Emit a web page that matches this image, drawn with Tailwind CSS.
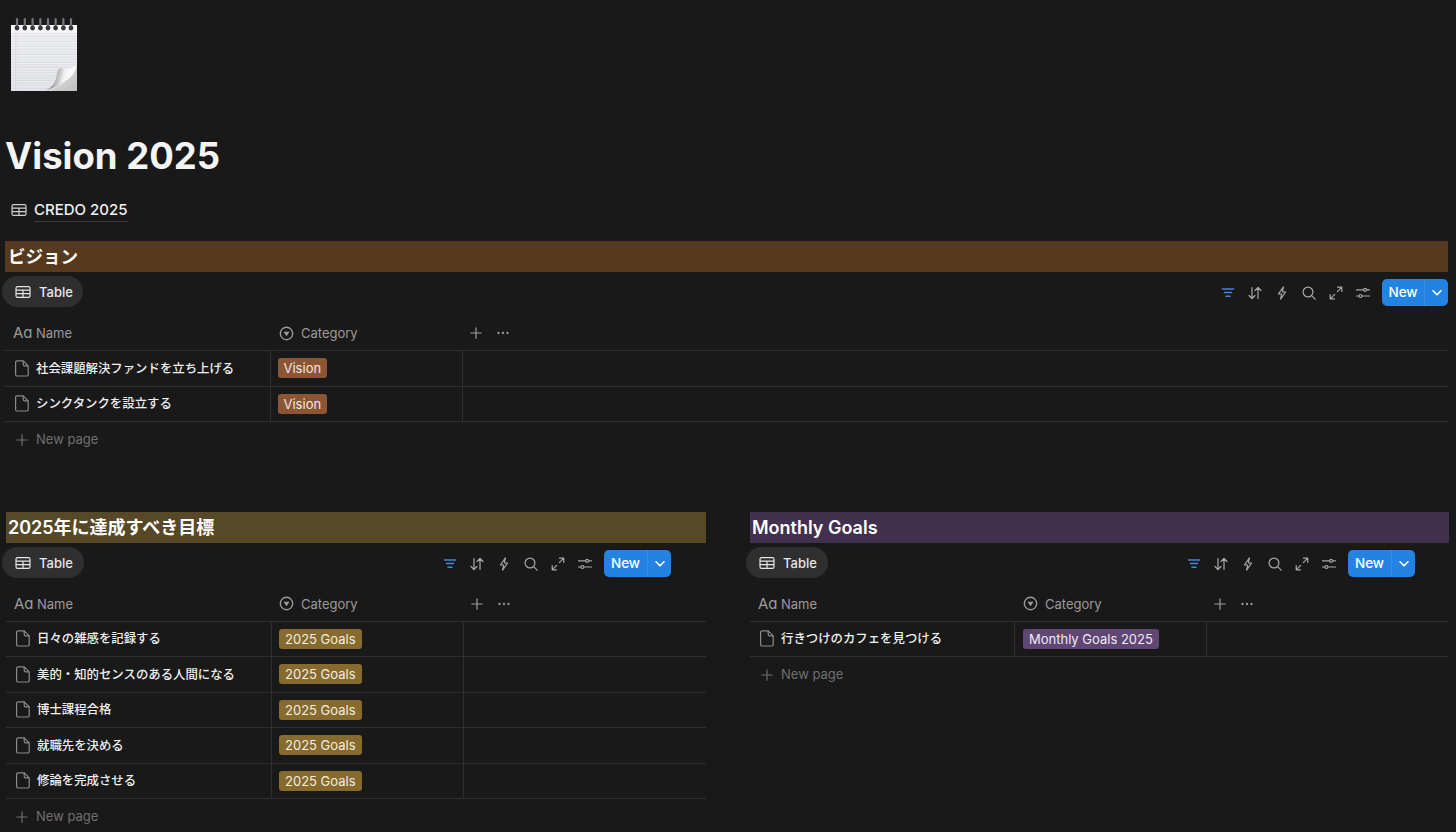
<!DOCTYPE html>
<html lang="ja">
<head>
    <meta charset="UTF-8">
    <meta name="viewport" content="width=device-width, initial-scale=1.0">
    <title>Vision 2025</title>
    <script src="https://cdn.jsdelivr.net/npm/@tailwindcss/browser@4"></script>
</head>
<body class="bg-[#191919] text-white font-[Inter,'Noto_Sans_CJK_JP',sans-serif] h-[832px] overflow-hidden">

    <!-- Shared icons -->
    <svg class="absolute w-0 h-0" aria-hidden="true">
        <symbol id="i-table" viewBox="0 0 16 16" fill="none" stroke="currentColor" stroke-width="1.2">
            <rect x="1" y="2.6" width="14" height="10.8" rx="1.6"/>
            <path d="M1 6.1h14M1 9.7h14M8 6.1v7.3"/>
        </symbol>
        <symbol id="i-filter" viewBox="0 0 16 16" fill="none" stroke="#4a85d6" stroke-width="1.5" stroke-linecap="round">
            <path d="M2.5 4h11M4.5 7.6h7M6 11.2h4"/>
        </symbol>
        <symbol id="i-sort" viewBox="0 0 16 16" fill="none" stroke="currentColor" stroke-width="1.2" stroke-linecap="round" stroke-linejoin="round">
            <path d="M5 2.5v11M2 10.5l3 3 3-3M11 13.5v-11M8 5.5l3-3 3 3"/>
        </symbol>
        <symbol id="i-bolt" viewBox="0 0 16 16" fill="none" stroke="currentColor" stroke-width="1.2" stroke-linejoin="round">
            <path d="M9.4 1.8 4.4 9h3.2l-1 5.2L11.6 7H8.4z"/>
        </symbol>
        <symbol id="i-search" viewBox="0 0 16 16" fill="none" stroke="currentColor" stroke-width="1.2" stroke-linecap="round">
            <circle cx="7" cy="7" r="4.9"/><path d="m10.6 10.6 3.6 3.6"/>
        </symbol>
        <symbol id="i-expand" viewBox="0 0 16 16" fill="none" stroke="currentColor" stroke-width="1.2" stroke-linecap="round" stroke-linejoin="round">
            <path d="M9.5 2.2h4.3v4.3M13.8 2.2 9.3 6.7M6.5 13.8H2.2V9.5M2.2 13.8l4.5-4.5"/>
        </symbol>
        <symbol id="i-sliders" viewBox="0 0 16 16" fill="none" stroke="currentColor" stroke-width="1.2" stroke-linecap="round">
            <path d="M1.5 4.8h7.2M11.6 4.8h2.9M1.5 11h2.4M6.9 11h7.6"/>
            <circle cx="10.1" cy="4.8" r="1.5"/><circle cx="5.4" cy="11" r="1.5"/>
        </symbol>
        <symbol id="i-page" viewBox="0 0 14 17" fill="none" stroke="#8a8a8a" stroke-width="1.2" stroke-linejoin="round">
            <path d="M2.2.8h6l5 5v8.6a1.6 1.6 0 0 1-1.6 1.6H2.2A1.6 1.6 0 0 1 .6 14.4V2.4A1.6 1.6 0 0 1 2.2.8z"/>
            <path d="M8.2.8v3.4c0 .9.7 1.6 1.6 1.6h3.4"/>
        </symbol>
        <symbol id="i-select" viewBox="0 0 16 16">
            <circle cx="8" cy="8" r="6.6" fill="none" stroke="currentColor" stroke-width="1.5"/>
            <path d="M4.8 6.2h6.4L8 10.9z" fill="currentColor"/>
        </symbol>
        <symbol id="i-plus" viewBox="0 0 12 12" fill="none" stroke="currentColor" stroke-width="1.2" stroke-linecap="round">
            <path d="M6 .8v10.4M.8 6h10.4"/>
        </symbol>
        <symbol id="i-dots" viewBox="0 0 12 4" fill="currentColor">
            <circle cx="1.5" cy="2" r="1.15"/><circle cx="6" cy="2" r="1.15"/><circle cx="10.5" cy="2" r="1.15"/>
        </symbol>
        <symbol id="i-chevron" viewBox="0 0 12 8" fill="none" stroke="currentColor" stroke-width="1.6" stroke-linecap="round" stroke-linejoin="round">
            <path d="m2 1.8 4 4 4-4"/>
        </symbol>
    </svg>

    <main class="pl-[5px] pr-[8px] pt-[16px]">
        <!-- Page icon -->
        <svg class="block ml-[6px]" width="66" height="76" viewBox="0 0 66 76" aria-hidden="true">
            <defs>
                <linearGradient id="paper" x1="0" y1="0" x2="0" y2="1">
                    <stop offset="0" stop-color="#f8f8f9"/>
                    <stop offset="1" stop-color="#e9e9eb"/>
                </linearGradient>
                <linearGradient id="curl" x1="0" y1="0.3" x2="1" y2="0.5">
                    <stop offset="0.05" stop-color="#5a5a5a"/>
                    <stop offset="0.32" stop-color="#a0a0a0"/>
                    <stop offset="0.62" stop-color="#f4f4f4"/>
                    <stop offset="1" stop-color="#ffffff"/>
                </linearGradient>
                <linearGradient id="under" x1="0" y1="0" x2="1" y2="1">
                    <stop offset="0" stop-color="#ececec"/>
                    <stop offset="1" stop-color="#bebebe"/>
                </linearGradient>
                <pattern id="lines" width="66" height="2.6" patternUnits="userSpaceOnUse">
                    <rect y="1.5" width="66" height="0.8" fill="#cdd2dc"/>
                </pattern>
            </defs>
            <rect y="9" width="66" height="66" fill="url(#paper)"/>
            <rect y="17" width="66" height="58" fill="url(#lines)"/>
            <rect x="4.5" y="14" width="0.7" height="61" fill="#dcd4d8"/>
            <path d="M66 48.5 V75 H34 C44 73 50 69 55 65 C60 60 64 55 66 48.5z" fill="url(#under)"/>
            <path d="M34 74.5 C41 72 45 66 46 58 C46.5 54 48 52 50 52 C55 54 60 53 65.5 48.5 C65 56 60 62 54 65 C48 70 40 73 34 74.5z" fill="url(#curl)"/>
            <g fill="none" stroke="#74777d" stroke-width="2.2" stroke-linecap="round">
                <path d="M6 10V3M13.8 10V3M21.6 10V3M29.4 10V3M37 10V3M44.6 10V3M52.4 10V3M60 10V3"/>
            </g>
            <g fill="#34363a">
                <circle cx="6" cy="12" r="2.4"/><circle cx="13.8" cy="12" r="2.4"/><circle cx="21.6" cy="12" r="2.4"/><circle cx="29.4" cy="12" r="2.4"/><circle cx="37" cy="12" r="2.4"/><circle cx="44.6" cy="12" r="2.4"/><circle cx="52.4" cy="12" r="2.4"/><circle cx="60" cy="12" r="2.4"/>
            </g>
        </svg>

        <h1 class="mt-[40px] text-[36.5px] leading-[48px] font-bold text-[#f4f4f4]">Vision 2025</h1>

        <a class="mt-[16px] ml-[6px] flex items-center gap-[7px] h-[28px] text-[#d0d0d0]">
            <svg class="w-[16px] h-[16px]"><use href="#i-table"/></svg>
            <span class="text-[15px] leading-[22px] font-medium text-[#f0f0f0] border-b border-[#3a3a3a]">CREDO 2025</span>
        </a>

        <!-- ビジョン -->
        <section class="mt-[17px]">
            <h2 class="h-[31px] pl-[3px] bg-[#563a1f] text-[17.5px] leading-[31px] font-semibold">ビジョン</h2>
            <div class="h-[44px] pt-[4px] flex items-start">
                <div class="-ml-[3px] h-[31px] w-[81px] rounded-full bg-[#2f2f2f] flex items-center gap-[8px] pl-[13px] text-[13px] font-medium text-[#e6e6e6]">
                    <svg class="w-[16px] h-[16px]"><use href="#i-table"/></svg><span class="mt-[2px]">Table</span>
                </div>
                <div class="ml-auto mt-[3px] h-[27px] flex items-center gap-[11px] text-[#a8a8a8]">
                    <svg class="w-[16px] h-[16px]"><use href="#i-filter"/></svg>
                    <svg class="w-[16px] h-[16px]"><use href="#i-sort"/></svg>
                    <svg class="w-[16px] h-[16px]"><use href="#i-bolt"/></svg>
                    <svg class="w-[16px] h-[16px]"><use href="#i-search"/></svg>
                    <svg class="w-[16px] h-[16px]"><use href="#i-expand"/></svg>
                    <svg class="w-[16px] h-[16px]"><use href="#i-sliders"/></svg>
                    <div class="h-[27px] w-[66px] rounded-[5px] bg-[#2383e2] flex text-white">
                        <span class="w-[43px] flex items-center justify-center text-[13.5px] font-medium border-r border-[#4f9be8]/50">New</span>
                        <span class="flex-1 flex items-center justify-center"><svg class="w-[12px] h-[8px]"><use href="#i-chevron"/></svg></span>
                    </div>
                </div>
            </div>
            <div class="h-[35px] flex items-center border-b border-[#2f2f2f] text-[13px] text-[#9b9b9b]">
                <div class="w-[265px] flex items-center pl-[8px] gap-[5px]"><span class="w-[18px] text-[15px] leading-[18px]">Aɑ</span><span class="mt-[2px]">Name</span></div>
                <div class="w-[192px] flex items-center pl-[9px] gap-[7px]"><svg class="w-[15px] h-[15px]"><use href="#i-select"/></svg><span class="mt-[2px]">Category</span></div>
                <svg class="ml-[8px] w-[12px] h-[12px]"><use href="#i-plus"/></svg>
                <svg class="ml-[15px] w-[12px] h-[4px]"><use href="#i-dots"/></svg>
            </div>
            <div class="h-[35.5px] flex border-b border-[#2f2f2f]">
                <div class="w-[265px] flex items-center pl-[10px] gap-[7px] text-[12.4px] font-medium text-[#f0f0f0]"><svg class="w-[14px] h-[17px]"><use href="#i-page"/></svg><span class="mt-[2px]">社会課題解決ファンドを立ち上げる</span></div>
                <div class="w-[193px] flex items-center pl-[7px] border-x border-[#2f2f2f]"><span class="h-[20px] px-[5.5px] rounded-[3px] bg-[#8c5533] text-[13px] leading-[20px] text-[#f0e9e3]">Vision</span></div>
            </div>
            <div class="h-[35.5px] flex border-b border-[#2f2f2f]">
                <div class="w-[265px] flex items-center pl-[10px] gap-[7px] text-[12.4px] font-medium text-[#f0f0f0]"><svg class="w-[14px] h-[17px]"><use href="#i-page"/></svg><span class="mt-[2px]">シンクタンクを設立する</span></div>
                <div class="w-[193px] flex items-center pl-[7px] border-x border-[#2f2f2f]"><span class="h-[20px] px-[5.5px] rounded-[3px] bg-[#8c5533] text-[13px] leading-[20px] text-[#f0e9e3]">Vision</span></div>
            </div>
            <div class="h-[36px] flex items-center pl-[11px] gap-[8px] text-[13px] text-[#6f6f6f]"><svg class="w-[12px] h-[12px]"><use href="#i-plus"/></svg>New page</div>
        </section>

        <div class="mt-[54px] ml-[1px] grid grid-cols-[700px_699px] gap-x-[44px]">
            <!-- 2025年に達成すべき目標 -->
            <section>
                <h2 class="h-[31px] pl-[2px] bg-[#574827] text-[18px] leading-[31px] font-semibold">2025年に達成すべき目標</h2>
                <div class="h-[44px] pt-[4px] flex items-start pr-[35px]">
                    <div class="-ml-[4px] h-[31px] w-[82px] rounded-full bg-[#2f2f2f] flex items-center gap-[8px] pl-[13px] text-[13px] font-medium text-[#e6e6e6]">
                        <svg class="w-[16px] h-[16px]"><use href="#i-table"/></svg><span class="mt-[2px]">Table</span>
                    </div>
                    <div class="ml-auto mt-[3px] h-[27px] flex items-center gap-[11px] text-[#a8a8a8]">
                        <svg class="w-[16px] h-[16px]"><use href="#i-filter"/></svg>
                        <svg class="w-[16px] h-[16px]"><use href="#i-sort"/></svg>
                        <svg class="w-[16px] h-[16px]"><use href="#i-bolt"/></svg>
                        <svg class="w-[16px] h-[16px]"><use href="#i-search"/></svg>
                        <svg class="w-[16px] h-[16px]"><use href="#i-expand"/></svg>
                        <svg class="w-[16px] h-[16px]"><use href="#i-sliders"/></svg>
                        <div class="h-[27px] w-[67px] rounded-[5px] bg-[#2383e2] flex text-white">
                            <span class="w-[44px] flex items-center justify-center text-[13.5px] font-medium border-r border-[#4f9be8]/50">New</span>
                            <span class="flex-1 flex items-center justify-center"><svg class="w-[12px] h-[8px]"><use href="#i-chevron"/></svg></span>
                        </div>
                    </div>
                </div>
                <div class="h-[34.5px] flex items-center border-b border-[#2f2f2f] text-[13px] text-[#9b9b9b]">
                    <div class="w-[265px] flex items-center pl-[8px] gap-[5px]"><span class="w-[18px] text-[15px] leading-[18px]">Aɑ</span><span class="mt-[2px]">Name</span></div>
                    <div class="w-[192px] flex items-center pl-[8px] gap-[7px]"><svg class="w-[15px] h-[15px]"><use href="#i-select"/></svg><span class="mt-[2px]">Category</span></div>
                    <svg class="ml-[8px] w-[12px] h-[12px]"><use href="#i-plus"/></svg>
                    <svg class="ml-[15px] w-[12px] h-[4px]"><use href="#i-dots"/></svg>
                </div>
                <div class="h-[35.5px] flex border-b border-[#2f2f2f]">
                    <div class="w-[265px] flex items-center pl-[10px] gap-[7px] text-[12.4px] font-medium text-[#f0f0f0]"><svg class="w-[14px] h-[17px]"><use href="#i-page"/></svg><span class="mt-[2px]">日々の雑感を記録する</span></div>
                    <div class="w-[193px] flex items-center pl-[7px] border-x border-[#2f2f2f]"><span class="h-[20px] px-[6px] rounded-[3px] bg-[#866a2e] text-[13px] leading-[20px] text-[#f2ede2]">2025 Goals</span></div>
                </div>
                <div class="h-[35.5px] flex border-b border-[#2f2f2f]">
                    <div class="w-[265px] flex items-center pl-[10px] gap-[7px] text-[12.4px] font-medium text-[#f0f0f0]"><svg class="w-[14px] h-[17px]"><use href="#i-page"/></svg><span class="mt-[2px]">美的・知的センスのある人間になる</span></div>
                    <div class="w-[193px] flex items-center pl-[7px] border-x border-[#2f2f2f]"><span class="h-[20px] px-[6px] rounded-[3px] bg-[#866a2e] text-[13px] leading-[20px] text-[#f2ede2]">2025 Goals</span></div>
                </div>
                <div class="h-[35.5px] flex border-b border-[#2f2f2f]">
                    <div class="w-[265px] flex items-center pl-[10px] gap-[7px] text-[12.4px] font-medium text-[#f0f0f0]"><svg class="w-[14px] h-[17px]"><use href="#i-page"/></svg><span class="mt-[2px]">博士課程合格</span></div>
                    <div class="w-[193px] flex items-center pl-[7px] border-x border-[#2f2f2f]"><span class="h-[20px] px-[6px] rounded-[3px] bg-[#866a2e] text-[13px] leading-[20px] text-[#f2ede2]">2025 Goals</span></div>
                </div>
                <div class="h-[35.5px] flex border-b border-[#2f2f2f]">
                    <div class="w-[265px] flex items-center pl-[10px] gap-[7px] text-[12.4px] font-medium text-[#f0f0f0]"><svg class="w-[14px] h-[17px]"><use href="#i-page"/></svg><span class="mt-[2px]">就職先を決める</span></div>
                    <div class="w-[193px] flex items-center pl-[7px] border-x border-[#2f2f2f]"><span class="h-[20px] px-[6px] rounded-[3px] bg-[#866a2e] text-[13px] leading-[20px] text-[#f2ede2]">2025 Goals</span></div>
                </div>
                <div class="h-[35.5px] flex border-b border-[#2f2f2f]">
                    <div class="w-[265px] flex items-center pl-[10px] gap-[7px] text-[12.4px] font-medium text-[#f0f0f0]"><svg class="w-[14px] h-[17px]"><use href="#i-page"/></svg><span class="mt-[2px]">修論を完成させる</span></div>
                    <div class="w-[193px] flex items-center pl-[7px] border-x border-[#2f2f2f]"><span class="h-[20px] px-[6px] rounded-[3px] bg-[#866a2e] text-[13px] leading-[20px] text-[#f2ede2]">2025 Goals</span></div>
                </div>
                <div class="h-[36px] flex items-center pl-[10px] gap-[8px] text-[13px] text-[#6f6f6f]"><svg class="w-[12px] h-[12px]"><use href="#i-plus"/></svg>New page</div>
            </section>

            <!-- Monthly Goals -->
            <section>
                <h2 class="h-[31px] pl-[2px] bg-[#42304f] text-[18px] leading-[31px] font-semibold">Monthly Goals</h2>
                <div class="h-[44px] pt-[4px] flex items-start pr-[34px]">
                    <div class="-ml-[4px] h-[31px] w-[82px] rounded-full bg-[#2f2f2f] flex items-center gap-[8px] pl-[13px] text-[13px] font-medium text-[#e6e6e6]">
                        <svg class="w-[16px] h-[16px]"><use href="#i-table"/></svg><span class="mt-[2px]">Table</span>
                    </div>
                    <div class="ml-auto mt-[3px] h-[27px] flex items-center gap-[11px] text-[#a8a8a8]">
                        <svg class="w-[16px] h-[16px]"><use href="#i-filter"/></svg>
                        <svg class="w-[16px] h-[16px]"><use href="#i-sort"/></svg>
                        <svg class="w-[16px] h-[16px]"><use href="#i-bolt"/></svg>
                        <svg class="w-[16px] h-[16px]"><use href="#i-search"/></svg>
                        <svg class="w-[16px] h-[16px]"><use href="#i-expand"/></svg>
                        <svg class="w-[16px] h-[16px]"><use href="#i-sliders"/></svg>
                        <div class="h-[27px] w-[67px] rounded-[5px] bg-[#2383e2] flex text-white">
                            <span class="w-[44px] flex items-center justify-center text-[13.5px] font-medium border-r border-[#4f9be8]/50">New</span>
                            <span class="flex-1 flex items-center justify-center"><svg class="w-[12px] h-[8px]"><use href="#i-chevron"/></svg></span>
                        </div>
                    </div>
                </div>
                <div class="h-[34.5px] flex items-center border-b border-[#2f2f2f] text-[13px] text-[#9b9b9b]">
                    <div class="w-[264px] flex items-center pl-[8px] gap-[5px]"><span class="w-[18px] text-[15px] leading-[18px]">Aɑ</span><span class="mt-[2px]">Name</span></div>
                    <div class="w-[192px] flex items-center pl-[9px] gap-[7px]"><svg class="w-[15px] h-[15px]"><use href="#i-select"/></svg><span class="mt-[2px]">Category</span></div>
                    <svg class="ml-[8px] w-[12px] h-[12px]"><use href="#i-plus"/></svg>
                    <svg class="ml-[15px] w-[12px] h-[4px]"><use href="#i-dots"/></svg>
                </div>
                <div class="h-[35.5px] flex border-b border-[#2f2f2f]">
                    <div class="w-[264px] flex items-center pl-[10px] gap-[7px] text-[12.4px] font-medium text-[#f0f0f0]"><svg class="w-[14px] h-[17px]"><use href="#i-page"/></svg><span class="mt-[2px]">行きつけのカフェを見つける</span></div>
                    <div class="w-[193px] flex items-center pl-[8px] border-x border-[#2f2f2f]"><span class="h-[20px] px-[6px] rounded-[3px] bg-[#5f4673] text-[13px] leading-[20px] text-[#f0ebf4]">Monthly Goals 2025</span></div>
                </div>
                <div class="h-[36px] flex items-center pl-[11px] gap-[8px] text-[13px] text-[#6f6f6f]"><svg class="w-[12px] h-[12px]"><use href="#i-plus"/></svg>New page</div>
            </section>
        </div>
    </main>
</body>
</html>
